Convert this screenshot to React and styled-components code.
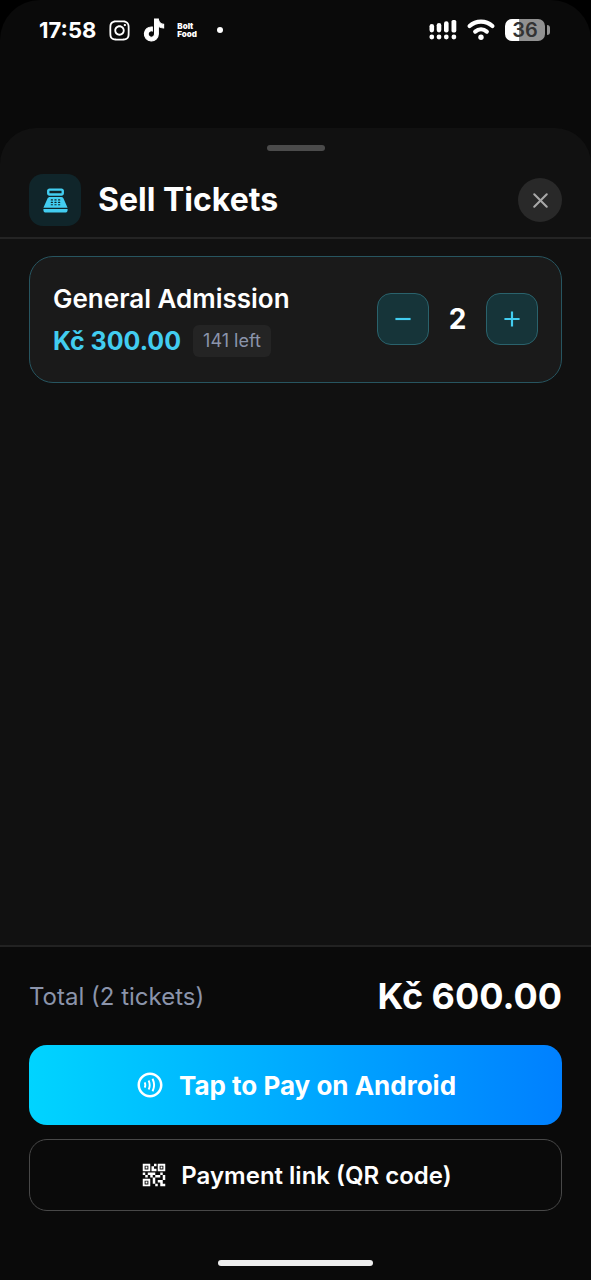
import { useState } from "react";
import styled, { createGlobalStyle } from "styled-components";
import { FaInstagram, FaTiktok } from "react-icons/fa";
import {
  MdAdd,
  MdOutlineContactless,
  MdPointOfSale,
  MdQrCode2,
  MdRemove,
} from "react-icons/md";
import { LuX } from "react-icons/lu";

const PRICE = 300;
const STOCK = 141;

const formatPrice = (value) => `Kč ${value.toFixed(2)}`;

function SignalIcon() {
  return (
    <svg width="28" height="20" viewBox="0 0 28 20" fill="#fff" aria-hidden="true">
      <rect x="0.5" y="4" width="4.6" height="8.4" rx="2.3" />
      <rect x="7.7" y="3" width="4.6" height="9.4" rx="2.3" />
      <rect x="15" y="1.2" width="4.6" height="11.2" rx="2.2" />
      <rect x="22.5" y="0" width="4.8" height="12.4" rx="1.6" />
      <circle cx="2.8" cy="17" r="2.4" />
      <circle cx="10" cy="17" r="2.4" />
      <circle cx="17.3" cy="17" r="2.4" />
      <circle cx="24.9" cy="17" r="2.4" />
    </svg>
  );
}

function WifiIcon() {
  return (
    <svg width="28" height="22" viewBox="0 0 28 22" fill="none" aria-hidden="true">
      <path
        d="M2.6 7C9 1.2 19 1.2 25.4 7M8.2 12.6c3.4-2.9 8.2-2.9 11.6 0"
        stroke="#fff"
        strokeWidth="4.2"
        strokeLinecap="round"
      />
      <circle cx="14" cy="18.2" r="2.7" fill="#fff" />
    </svg>
  );
}

export default function App() {
  const [count, setCount] = useState(2);

  return (
    <>
      <GlobalStyle />
      <Screen>
        <StatusBar>
          <StatusGroup>
            <Time>17:58</Time>
            <FaInstagram size={23} />
            <FaTiktok size={22} stroke="currentColor" strokeWidth={26} />
            <BoltFood>
              Bolt
              <br />
              Food
            </BoltFood>
            <Dot />
          </StatusGroup>
          <StatusIcons>
            <SignalIcon />
            <WifiIcon />
            <Battery>
              <BatteryLevel>36</BatteryLevel>
              <BatteryTip />
            </Battery>
          </StatusIcons>
        </StatusBar>

        <Sheet>
          <Handle />
          <Header>
            <HeaderIcon>
              <MdPointOfSale size={29} />
            </HeaderIcon>
            <Title>Sell Tickets</Title>
            <CloseButton type="button" aria-label="Close">
              <LuX size={25} strokeWidth={2} />
            </CloseButton>
          </Header>

          <Content>
            <TicketCard>
              <TicketInfo>
                <TicketName>General Admission</TicketName>
                <PriceRow>
                  <Price>{formatPrice(PRICE)}</Price>
                  <Stock>{STOCK} left</Stock>
                </PriceRow>
              </TicketInfo>
              <Stepper>
                <StepButton
                  type="button"
                  aria-label="Remove ticket"
                  onClick={() => setCount(Math.max(0, count - 1))}
                >
                  <MdRemove size={26} />
                </StepButton>
                <Count>{count}</Count>
                <StepButton
                  type="button"
                  aria-label="Add ticket"
                  onClick={() => setCount(Math.min(STOCK, count + 1))}
                >
                  <MdAdd size={26} />
                </StepButton>
              </Stepper>
            </TicketCard>
          </Content>

          <Footer>
            <TotalRow>
              <TotalLabel>Total ({count} tickets)</TotalLabel>
              <TotalValue>{formatPrice(PRICE * count)}</TotalValue>
            </TotalRow>
            <PayButton type="button">
              <MdOutlineContactless size={30} />
              Tap to Pay on Android
            </PayButton>
            <LinkButton type="button">
              <MdQrCode2 size={30} />
              Payment link (QR code)
            </LinkButton>
            <HomeBar />
          </Footer>
        </Sheet>
      </Screen>
    </>
  );
}

const GlobalStyle = createGlobalStyle`
  * {
    box-sizing: border-box;
  }
  body {
    margin: 0;
    background: #000;
    color: #fff;
    font-family: Inter, "Liberation Sans", sans-serif;
  }
  button {
    font-family: inherit;
    cursor: pointer;
  }
  svg {
    flex-shrink: 0;
    overflow: visible;
  }
`;

const Screen = styled.div`
  display: flex;
  flex-direction: column;
  min-height: 100vh;
  background: #0a0a0a;
  border-radius: 40px 40px 0 0;
`;

const StatusBar = styled.div`
  display: flex;
  justify-content: space-between;
  align-items: flex-start;
  height: 128px;
  padding: 16px 41px 0 39px;
`;

const StatusGroup = styled.div`
  display: flex;
  align-items: center;
  gap: 12px;
  height: 28px;
`;

const StatusIcons = styled(StatusGroup)`
  gap: 10px;
`;

const Time = styled.span`
  font-size: 22px;
  font-weight: 700;
`;

const BoltFood = styled.span`
  font-size: 8px;
  line-height: 8px;
  font-weight: 900;
`;

const Dot = styled.span`
  width: 6px;
  height: 6px;
  margin-left: 8px;
  border-radius: 50%;
  background: #fff;
`;

const Battery = styled.div`
  display: flex;
  align-items: center;
  gap: 2px;
`;

const BatteryLevel = styled.span`
  width: 40px;
  border-radius: 7px;
  background: linear-gradient(90deg, #fff 36%, #919191 36%);
  color: #333;
  font-size: 20px;
  line-height: 22px;
  font-weight: 600;
  text-align: center;
`;

const BatteryTip = styled.span`
  width: 3px;
  height: 10px;
  border-radius: 0 3px 3px 0;
  background: #919191;
`;

const Sheet = styled.main`
  display: flex;
  flex-direction: column;
  flex: 1;
  padding-top: 17px;
  border-radius: 36px 36px 0 0;
  background: #111;
`;

const Handle = styled.div`
  align-self: center;
  width: 58px;
  height: 6px;
  border-radius: 3px;
  background: #4b4b4b;
`;

const Header = styled.header`
  display: flex;
  align-items: center;
  gap: 17px;
  padding: 23px 29px 11px;
  border-bottom: 2px solid #242424;
`;

const HeaderIcon = styled.div`
  display: grid;
  place-items: center;
  width: 52px;
  height: 52px;
  border-radius: 14px;
  background: #10252a;
  color: #42cdf0;
`;

const Title = styled.h1`
  flex: 1;
  margin: 0;
  font-size: 32px;
  line-height: 36px;
  font-weight: 700;
`;

const CloseButton = styled.button`
  display: grid;
  place-items: center;
  width: 44px;
  height: 44px;
  padding: 0;
  border: 0;
  border-radius: 50%;
  background: #292929;
  color: #a8a8a8;
`;

const Content = styled.section`
  flex: 1;
  padding: 17px 29px;
`;

const TicketCard = styled.article`
  display: flex;
  justify-content: space-between;
  align-items: center;
  padding: 24px 23px 25px;
  border: 1px solid #275560;
  border-radius: 24px;
  background: #1a1a1a;
`;

const TicketInfo = styled.div`
  display: flex;
  flex-direction: column;
  gap: 8px;
`;

const TicketName = styled.h2`
  margin: 0;
  font-size: 26px;
  line-height: 36px;
  font-weight: 600;
`;

const PriceRow = styled.div`
  display: flex;
  align-items: center;
  gap: 12px;
`;

const Price = styled.span`
  color: #42cdf0;
  font-size: 25px;
  line-height: 32px;
  font-weight: 700;
`;

const Stock = styled.span`
  padding: 0 10px;
  border-radius: 6px;
  background: #242424;
  color: #8b94ab;
  font-size: 18px;
  line-height: 32px;
`;

const Stepper = styled.div`
  display: flex;
  align-items: center;
`;

const StepButton = styled.button`
  display: grid;
  place-items: center;
  width: 52px;
  height: 52px;
  padding: 0;
  border: 1px solid #2a626c;
  border-radius: 14px;
  background: #163439;
  color: #42cdf0;
`;

const Count = styled.output`
  width: 57px;
  font-size: 28px;
  line-height: 36px;
  font-weight: 700;
  text-align: center;
`;

const Footer = styled.footer`
  display: flex;
  flex-direction: column;
  padding: 26px 29px 14px;
  border-top: 2px solid #222;
  background: #0a0a0a;
`;

const TotalRow = styled.div`
  display: flex;
  justify-content: space-between;
  align-items: center;
  margin-bottom: 26px;
`;

const TotalLabel = styled.span`
  color: #8b94ab;
  font-size: 24px;
`;

const TotalValue = styled.strong`
  font-size: 36px;
  line-height: 46px;
  font-weight: 700;
`;

const ActionButton = styled.button`
  display: flex;
  justify-content: center;
  align-items: center;
  border-radius: 18px;
  color: #fff;
`;

const PayButton = styled(ActionButton)`
  gap: 14px;
  height: 80px;
  border: 0;
  background: linear-gradient(90deg, #00d4ff, #0080ff);
  font-size: 26px;
  font-weight: 700;
`;

const LinkButton = styled(ActionButton)`
  gap: 12px;
  height: 72px;
  margin-top: 14px;
  border: 1px solid #484848;
  background: transparent;
  font-size: 24px;
  font-weight: 600;
`;

const HomeBar = styled.div`
  align-self: center;
  width: 155px;
  height: 6px;
  margin-top: 49px;
  border-radius: 3px;
  background: #eee;
`;
